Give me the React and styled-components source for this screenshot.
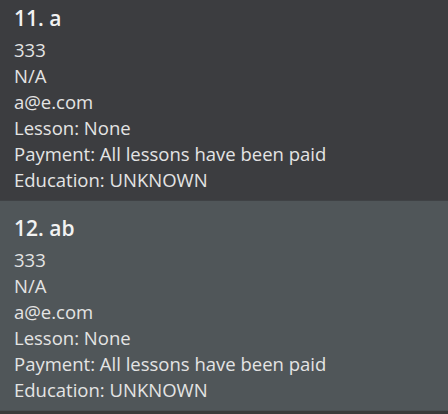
import styled, { createGlobalStyle } from 'styled-components';

const people = [
  { id: 11, name: 'a', phone: '333', address: 'N/A', email: 'a@e.com', lesson: 'None', payment: 'All lessons have been paid', education: 'UNKNOWN' },
  { id: 12, name: 'ab', phone: '333', address: 'N/A', email: 'a@e.com', lesson: 'None', payment: 'All lessons have been paid', education: 'UNKNOWN', selected: true },
];

const GlobalStyle = createGlobalStyle`
  html, body {
    margin: 0;
    padding: 0;
    background: #3a3a3a;
  }
  body {
    font-family: "Open Sans", "Noto Sans", sans-serif;
    overflow: hidden;
  }
`;

const List = styled.div`
  width: 448px;
  height: 414px;
  overflow: hidden;
  background: #3a3a3a;
`;

const Track = styled.div`
  display: flex;
  flex-direction: column;
  margin-top: -9px;
`;

const Card = styled.div`
  height: 210px;
  box-sizing: border-box;
  padding: 12px 14px 0;
  background: ${(p) => (p.selected ? '#505659' : '#3c3d40')};
  border-bottom: 1px solid ${(p) => (p.selected ? '#4a4f52' : '#3f4245')};
  display: flex;
  flex-direction: column;
`;

const Title = styled.div`
  font-size: 21px;
  font-weight: 600;
  line-height: 30px;
  color: #f2f2f2;
  margin-bottom: 4px;
`;

const Line = styled.div`
  font-size: 18.5px;
  line-height: 26px;
  color: #e4e4e4;
  white-space: nowrap;
`;

const PersonCard = ({ person }) => (
  <Card selected={person.selected}>
    <Title>
      {person.id}. {person.name}
    </Title>
    <Line>{person.phone}</Line>
    <Line>{person.address}</Line>
    <Line>{person.email}</Line>
    <Line>Lesson: {person.lesson}</Line>
    <Line>Payment: {person.payment}</Line>
    <Line>Education: {person.education}</Line>
  </Card>
);

export default function App() {
  return (
    <>
      <GlobalStyle />
      <List>
        <Track>
          {people.map((p) => (
            <PersonCard key={p.id} person={p} />
          ))}
        </Track>
      </List>
    </>
  );
}
